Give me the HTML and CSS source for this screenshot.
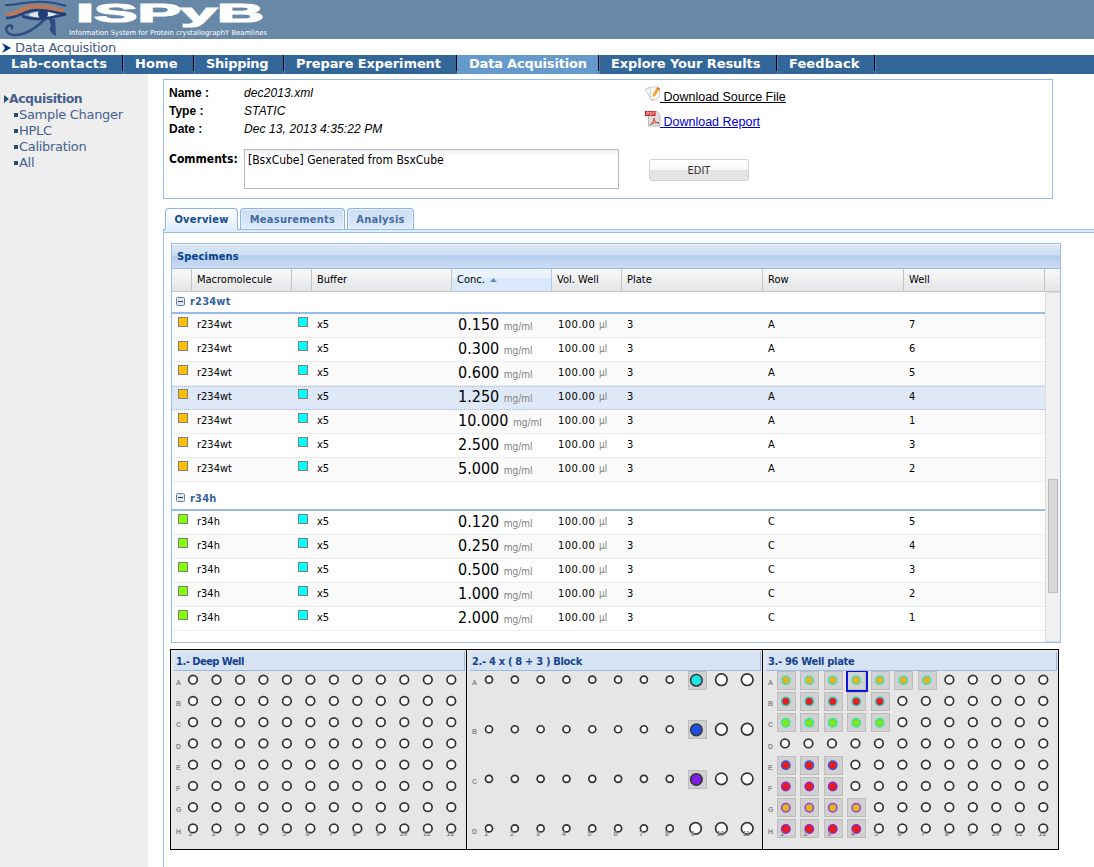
FILE: index.html
```html
<!DOCTYPE html>
<html lang="en">
<head>
<meta charset="utf-8">
<title>ISPyB - Data Acquisition</title>
<link rel="stylesheet" href="styles.css">
</head>
<body>
<header class="banner">
  <svg class="logo" width="300" height="39" viewBox="0 0 300 39">
    <path d="M5 5C14 6 22 2 36 2C50 1 58 4 66 6" fill="none" stroke="#2d4d83" stroke-width="2"/>
    <path d="M5 13C18 12 22 4 36 4C50 4 57 8 65 9L64 14C53 11 44 8 35 9C24 10 20 17 6 16Z" fill="#b9785a"/>
    <path d="M6 18C20 18 24 10 37 10C49 10 56 13 66 14" fill="none" stroke="#233f76" stroke-width="2.500"/>
    <path d="M28 15C34 11 44 10 57 14C49 18 38 19 28 15Z" fill="#dfe9f2"/>
    <circle cx="43" cy="14" r="5" fill="#233f76"/>
    <path d="M22 16C31 20 46 20 66 14" fill="none" stroke="#233f76" stroke-width="2.500"/>
    <path d="M45 19C37 27 27 35 15 35C7 35 4 29 8 26C11 24 14 27 11 29" fill="none" stroke="#2d4d83" stroke-width="2.500"/>
    <path d="M49 19H55L56 36C51 34 48 29 51 26Z" fill="#2d4d83"/>
    <text class="logo-name" x="76" y="22" textLength="188" lengthAdjust="spacingAndGlyphs">ISPyB</text>
    <text class="logo-tag" x="69" y="35" textLength="198" lengthAdjust="spacingAndGlyphs">Information System for Protein crystallographY Beamlines</text>
  </svg>
</header>
<div class="crumb">
  <svg width="9" height="10" viewBox="0 0 9 10"><path d="M0 0L9 5L0 10L3 5Z" fill="#003080"/></svg>
  <span>Data Acquisition</span>
</div>
<nav class="menu">
  <a class="m1">Lab-contacts</a><a class="m2">Home</a><a class="m3">Shipping</a><a class="m4">Prepare Experiment</a><a class="m5 active">Data Acquisition</a><a class="m6">Explore Your Results</a><a class="m7">Feedback</a>
</nav>
<div class="body">
  <aside class="side">
    <div class="side-head"><svg width="5" height="8" viewBox="0 0 5 8"><path d="M0 0L5 4L0 8Z" fill="#1f4e79"/></svg>Acquisition</div>
    <div class="side-item">Sample Changer</div>
    <div class="side-item">HPLC</div>
    <div class="side-item">Calibration</div>
    <div class="side-item">All</div>
  </aside>
  <main class="main">
    <section class="info">
      <div class="fields">
        <dl class="meta">
          <dt>Name :</dt><dd>dec2013.xml</dd>
          <dt>Type :</dt><dd>STATIC</dd>
          <dt>Date :</dt><dd>Dec 13, 2013 4:35:22 PM</dd>
        </dl>
        <div class="comments"><label>Comments:</label><div class="area">[BsxCube] Generated from BsxCube</div></div>
      </div>
      <div class="actions">
        <a class="dl source"><svg width="16" height="16" viewBox="0 0 16 16"><path d="M.5 3L6 1L14 11L7 15Z" fill="#f5f5f5" stroke="#bbb" stroke-width=".8"/><path d="M6 1H14L15 10L10 14L5 13Z" fill="#f9f9f9" stroke="#c4c4c4" stroke-width=".7"/><path d="M11.500 2L14.500 3.500L10 10L7.500 11L8 8Z" fill="#f5a623"/><path d="M12 1L15 2.500L14.500 4L11.500 2.500Z" fill="#d66b55"/></svg><span>&nbsp;Download Source File</span></a>
        <a class="dl report"><svg width="16" height="16" viewBox="0 0 16 16"><path d="M3.500 .5H12L15 3.500V15H3.500Z" fill="#dedede" stroke="#999" stroke-width=".6"/><path d="M0 0H10.500V5H0Z" fill="#d9201c"/><path d="M2 4V1.200H3.500V2.800H2M5 1.200V4H6.200V1.200H5M8 4V1.200H9.500M8 2.700H9" fill="none" stroke="#fff" stroke-width=".6"/><path d="M5 14C8 12 9 9 9 7C9 10 11 12 14 12C10 11 7 12 5 14Z" fill="none" stroke="#c44" stroke-width="1"/></svg><span>&nbsp;Download Report</span></a>
        <button class="edit">EDIT</button>
      </div>
    </section>
    <div class="tabs"><span class="tab on">Overview</span><span class="tab t2">Measurements</span><span class="tab t3">Analysis</span></div>
    <div class="tabline"></div>
    <div class="panel">
      <section class="grid">
        <h2>Specimens</h2>
        <div class="cols head">
          <span></span><span>Macromolecule</span><span></span><span>Buffer</span>
          <span class="sorted">Conc. <svg width="7" height="4" viewBox="0 0 7 4"><path d="M0 4L3.500 0L7 4Z" fill="#5f8fce"/></svg></span>
          <span>Vol. Well</span><span>Plate</span><span>Row</span><span>Well</span><span></span>
        </div>
        <div class="scroller">
          <div class="rows" id="rows"></div>
          <div class="track"><div class="thumb"></div></div>
        </div>
      </section>
      <section class="plates">
        <div class="plate deep"><h3>1.- Deep Well</h3><svg id="p1" width="295" height="178" viewBox="0 0 295 178"></svg></div>
        <div class="plate"><h3>2.- 4 x ( 8 + 3 ) Block</h3><svg id="p2" width="295" height="178" viewBox="0 0 295 178"></svg></div>
        <div class="plate"><h3>3.- 96 Well plate</h3><svg id="p3" width="295" height="178" viewBox="0 0 295 178"></svg></div>
      </section>
    </div>
  </main>
</div>
<script src="app.js"></script>
</body>
</html>
```
FILE: styles.css
```css
* { box-sizing: border-box; }
body { margin: 0; height: 867px; overflow: hidden; background: #fff; font-family: "DejaVu Sans Condensed", "DejaVu Sans", sans-serif; font-stretch: condensed; font-size: 11px; color: #000; display: flex; flex-direction: column; }
svg { display: block; }
.banner { height: 39px; flex: none; background: #6888a8; }
.logo { overflow: visible; }
.logo-name { font: bold 26px "Liberation Sans", sans-serif; fill: #fff; stroke: #fff; stroke-width: 1.2px; }
.logo-tag { font: 7px "DejaVu Sans", sans-serif; fill: #fff; }
.crumb { height: 16px; flex: none; display: flex; align-items: center; gap: 4px; padding: 1px 0 0 2px; font: 13px/16px "DejaVu Sans", sans-serif; color: #3f5a85; letter-spacing: -.35px; }
.menu { height: 19px; flex: none; display: flex; background: #336699; font: bold 13px/17px "DejaVu Sans", sans-serif; color: #fff; }
.menu a { padding-left: 12px; height: 19px; background: linear-gradient(#000, #000) right top / 1px 16px no-repeat; box-shadow: 1px 0 0 #4d7fc4; white-space: nowrap; letter-spacing: -.1px; }
.menu .m1 { width: 123px; padding-left: 11px; letter-spacing: .15px; }
.menu .m2 { width: 71px; letter-spacing: .15px; }
.menu .m3 { width: 90px; letter-spacing: -.3px; }
.menu .m4 { width: 173px; }
.menu .m5 { width: 142px; letter-spacing: -.2px; }
.menu .m6 { width: 178px; }
.menu .m7 { width: 98px; letter-spacing: .1px; }
.menu .active { background-color: #6699cc; }
.body { flex: 1; display: flex; min-height: 0; }
.side { width: 148px; flex: none; background: #eee; padding: 17px 0 0 4px; font: 13px/16px "DejaVu Sans", sans-serif; color: #46618e; letter-spacing: -.3px; }
.side-head { display: flex; align-items: center; font-size: 12.5px; font-weight: bold; letter-spacing: -.5px; }
.side-item { display: flex; align-items: center; gap: 1px; padding-left: 10px; }
.side-item::before { content: ""; width: 4px; height: 4px; background: #1f4e79; }
.main { flex: 1; min-width: 0; padding: 5px 0 0 15px; display: flex; flex-direction: column; }
.info { width: 890px; height: 120px; flex: none; border: 1px solid #99bbe8; display: flex; }
.fields { width: 481px; padding: 4px 0 0 5px; }
.meta { margin: 0; display: grid; grid-template-columns: 75px 1fr; font: 12px/18px "Liberation Sans", sans-serif; }
.meta dt { font-weight: bold; }
.meta dd { margin: 0; font-style: italic; letter-spacing: .1px; }
.comments { display: flex; margin-top: 11px; }
.comments label { width: 75px; font: bold 12px/20px "DejaVu Sans Condensed", sans-serif; }
.area { width: 375px; height: 40px; border: 1px solid #b5b8c8; background: linear-gradient(#eef0f1, #fff 7px); padding: 2px 3px; font-size: 12px; line-height: 17px; }
.actions { display: flex; flex-direction: column; align-items: flex-start; padding-top: 6px; }
.dl { display: flex; height: 25px; font: 12.5px/22px "Liberation Sans", sans-serif; letter-spacing: 0; }
.dl span { text-decoration: underline; margin-left: -1px; }
.report { color: #00c; }
.edit { width: 100px; height: 22px; margin: 23px 0 0 4px; border: 1px solid #d1d1d1; border-radius: 3px; background: linear-gradient(#fff, #f9f9f9 48%, #e2e2e2 52%, #e7e7e7); font: 11px "DejaVu Sans Condensed", sans-serif; color: #333; padding: 0; }
.tabs { height: 30px; flex: none; display: flex; align-items: flex-end; gap: 2px; padding-left: 2px; }
.tab { height: 21px; width: 105px; border: 1px solid #8db2e3; border-bottom: 0; border-radius: 4px 4px 0 0; background: linear-gradient(#cbdcf3, #dfecfb); box-shadow: inset 0 0 0 1px #eaf3ff; font: bold 11px/22px "DejaVu Sans Condensed", sans-serif; letter-spacing: .25px; text-align: center; color: #416da3; }
.tab.on { width: 73px; height: 22px; margin-bottom: -1px; background: linear-gradient(#fff, #deecfd); box-shadow: inset 1px 1px 0 #fff; color: #15498b; position: relative; }
.tab.t3 { width: 67px; }
.tabline { height: 4px; flex: none; border: 1px solid #99bbe8; border-right: 0; background: #deecfd; }
.panel { flex: 1; border-left: 1px solid #99bbe8; padding: 10px 0 0 6px; }
.grid { width: 890px; height: 400px; border: 1px solid #99bbe8; margin-left: 1px; }
.grid h2 { margin: 0; height: 25px; border-top: 1px solid #f3f7fc; background: linear-gradient(#dae7f6, #cddef3 10px, #abc7ec 11px, #b8cfee 12px, #cbddf4); border-bottom: 1px solid #99bbe8; font: bold 11px/23px "DejaVu Sans Condensed", sans-serif; letter-spacing: .2px; color: #04408c; padding-left: 5px; }
.cols { display: grid; grid-template-columns: 20px 100px 20px 140px 100px 70px 141px 141px 141px; }
.head { height: 23px; grid-template-columns: 20px 100px 20px 140px 100px 70px 141px 141px 141px 1fr; border-bottom: 1px solid #c5c5c5; background: linear-gradient(#f9f9f9, #e3e4e6); line-height: 22px; }
.head span { border-right: 1px solid #c5c5c5; padding-left: 5px; }
.head span:last-child { border: 0; }
.head .sorted { background: linear-gradient(#ebf3fd 40%, #d9e8fb 41%); border-color: #aaccf6; display: flex; align-items: center; gap: 5px; }
.scroller { display: flex; height: 350px; }
.rows { width: 873px; overflow: hidden; }
.group { height: 29px; border-bottom: 2px solid #99bbe8; padding: 6px 0 0 4px; font: bold 11px/22px "DejaVu Sans Condensed", sans-serif; color: #3764a0; display: flex; align-items: center; gap: 5px; letter-spacing: .2px; }
.group:first-child { height: 22px; padding-top: 0; }
.group svg { margin-top: -2px; }
.row { height: 24px; border-bottom: 1px solid #ededed; border-top: 1px solid transparent; line-height: 19px; }
.row > span { padding-left: 5px; white-space: nowrap; }
.row.alt { background-color: #fafafa; }
.row.sel { background: #dfe8f6; border-top: 1px dotted #a3bae9; border-bottom: 1px dotted #a3bae9; }
.sw { width: 10px; height: 10px; border: 1px solid #808080; margin: 2px 0 0 6px; }
.row .conc { font-size: 16px; padding-left: 6px; }
.row .vol { letter-spacing: .45px; padding-left: 6px; }
.unit { font-size: 10px; color: #808080; letter-spacing: 0; }
.track { width: 15px; background: #f1f1f1; border: 1px solid #dcdcdc; border-right: 0; padding: 186px 2px 0; }
.thumb { width: 10px; height: 114px; border: 1px solid #bbb; background: #d9d9d9; border-radius: 1px; }
.plates { width: 889px; height: 201px; margin-top: 6px; border: 1px solid #000; background: #e6e6e6; display: grid; grid-template-columns: 296px 296px 295px; }
.plate { border-right: 1px solid #000; padding: 1px 0 0; }
.plate:last-child { border-right: 0; }
.plate h3 { margin: 0 1px 0 2px; height: 20px; border: 1px solid #99bbe8; border-top-color: #e1ebf7; border-left-color: #e1ebf7; background: #d6e3f3; font: bold 11px/19px "DejaVu Sans Condensed", sans-serif; letter-spacing: -.3px; color: #15428b; padding-left: 2px; }
.plate.deep h3 { letter-spacing: -.5px; }
.mark { font: bold 7px "Liberation Sans", sans-serif; fill: #888; }
.well { fill: #fff; stroke: #333; stroke-width: 1.7; }
.slot { fill: #d1d1d1; stroke: #bdbdbd; stroke-width: 1; }
.pick { fill: none; stroke: #1212dd; stroke-width: 2; }
```
FILE: app.js
```js
const groups = [
  { name: 'r234wt', color: '#ffbf00', plateRow: 'A', alt: 0, selected: '1.250',
    items: [['0.150', 7], ['0.300', 6], ['0.600', 5], ['1.250', 4], ['10.000', 1], ['2.500', 3], ['5.000', 2]] },
  { name: 'r34h', color: '#80ff00', plateRow: 'C', alt: 1,
    items: [['0.120', 5], ['0.250', 4], ['0.500', 3], ['1.000', 2], ['2.000', 1]] }
];
const toggle = '<svg width="9" height="9" viewBox="0 0 9 9"><rect x=".5" y=".5" width="8" height="8" rx="1" fill="#dfe7f0" stroke="#6d8099"/><path d="M2 4.500H7" stroke="#223b5c"/></svg>';
document.getElementById('rows').innerHTML = groups.map(g =>
  `<div class="group">${toggle}${g.name}</div>` + g.items.map(([conc, well], i) =>
    `<div class="cols row${i % 2 === g.alt ? ' alt' : ''}${conc === g.selected ? ' sel' : ''}">
      <div class="sw" style="background:${g.color}"></div><span>${g.name}</span>
      <div class="sw" style="background:#00ffff"></div><span>x5</span>
      <span class="conc">${conc} <span class="unit">mg/ml</span></span>
      <span class="vol">100.00 <span class="unit">µl</span></span>
      <span>3</span><span>${g.plateRow}</span><span>${well}</span></div>`).join('')).join('');

const circle = (x, y, r) => `<circle class="well" cx="${x}" cy="${y}" r="${r}"/>`;
const label = (x, y, t) => `<text class="mark" x="${x}" y="${y}">${t}</text>`;

// Draws a plate: lettered rows, numbered columns, and optional filled wells.
function plate(id, { x0, dx, cols, rows, labelX, radius, filled = {} }) {
  const dy = 148.7 / (rows - 1);
  let out = '';
  for (let r = 0; r < rows; r++) {
    const y = 8.7 + r * dy, letter = 'ABCDEFGH'[r];
    out += label(labelX, 13.8 + r * dy, letter);
    for (let c = 0; c < cols; c++) {
      const x = x0 + c * dx, f = filled[letter];
      const hit = f && c >= (f.from || 0) && c < f.to;
      if (!hit) { out += circle(x, y, radius(c)); continue; }
      out += `<rect class="slot" x="${Math.round(x - 8) + .5}" y="${Math.round(y - 9) + .5}" width="18" height="18"/>`;
      if (f.pick === c) out += `<rect class="pick" x="${Math.round(x) - 8}" y="${Math.round(y) - 9}" width="20" height="20"/>`;
      out += `<circle cx="${x + .8}" cy="${y + .6}" r="${f.r || 4.2}" fill="${f.fill}" stroke="${f.ring}" stroke-width="1.500"/>`;
    }
  }
  for (let c = 0; c < cols; c++) out += label(x0 - 4.7 + c * dx, 164.7, c + 1);
  document.getElementById(id).innerHTML = out;
}
plate('p1', { x0: 22, dx: 23.48, cols: 12, rows: 8, labelX: 5, radius: () => 4.3 });
const block = (fill) => ({ from: 8, to: 9, fill, ring: '#333', r: 5.8 });
plate('p2', { x0: 22, dx: 25.82, cols: 11, rows: 4, labelX: 5, radius: c => c > 7 ? 5.8 : 3.5,
  filled: { A: block('#1de5e5'), B: block('#1d4fe5'), C: block('#7f1de5') } });
plate('p3', { x0: 22, dx: 23.48, cols: 12, rows: 8, labelX: 5, radius: () => 4.3,
  filled: {
    A: { to: 7, fill: '#e5b31d', ring: '#45e0c8', pick: 3 },
    B: { to: 5, fill: '#e51d1d', ring: '#38c9c4' },
    C: { to: 5, fill: '#80e51d', ring: '#38e5b0' },
    E: { to: 3, fill: '#e51d1d', ring: '#4058d8' },
    F: { to: 3, fill: '#e51d1d', ring: '#9428c8' },
    G: { to: 4, fill: '#e5b31d', ring: '#9145d0' },
    H: { to: 4, fill: '#e51d1d', ring: '#9b23bd' }
  } });
```
